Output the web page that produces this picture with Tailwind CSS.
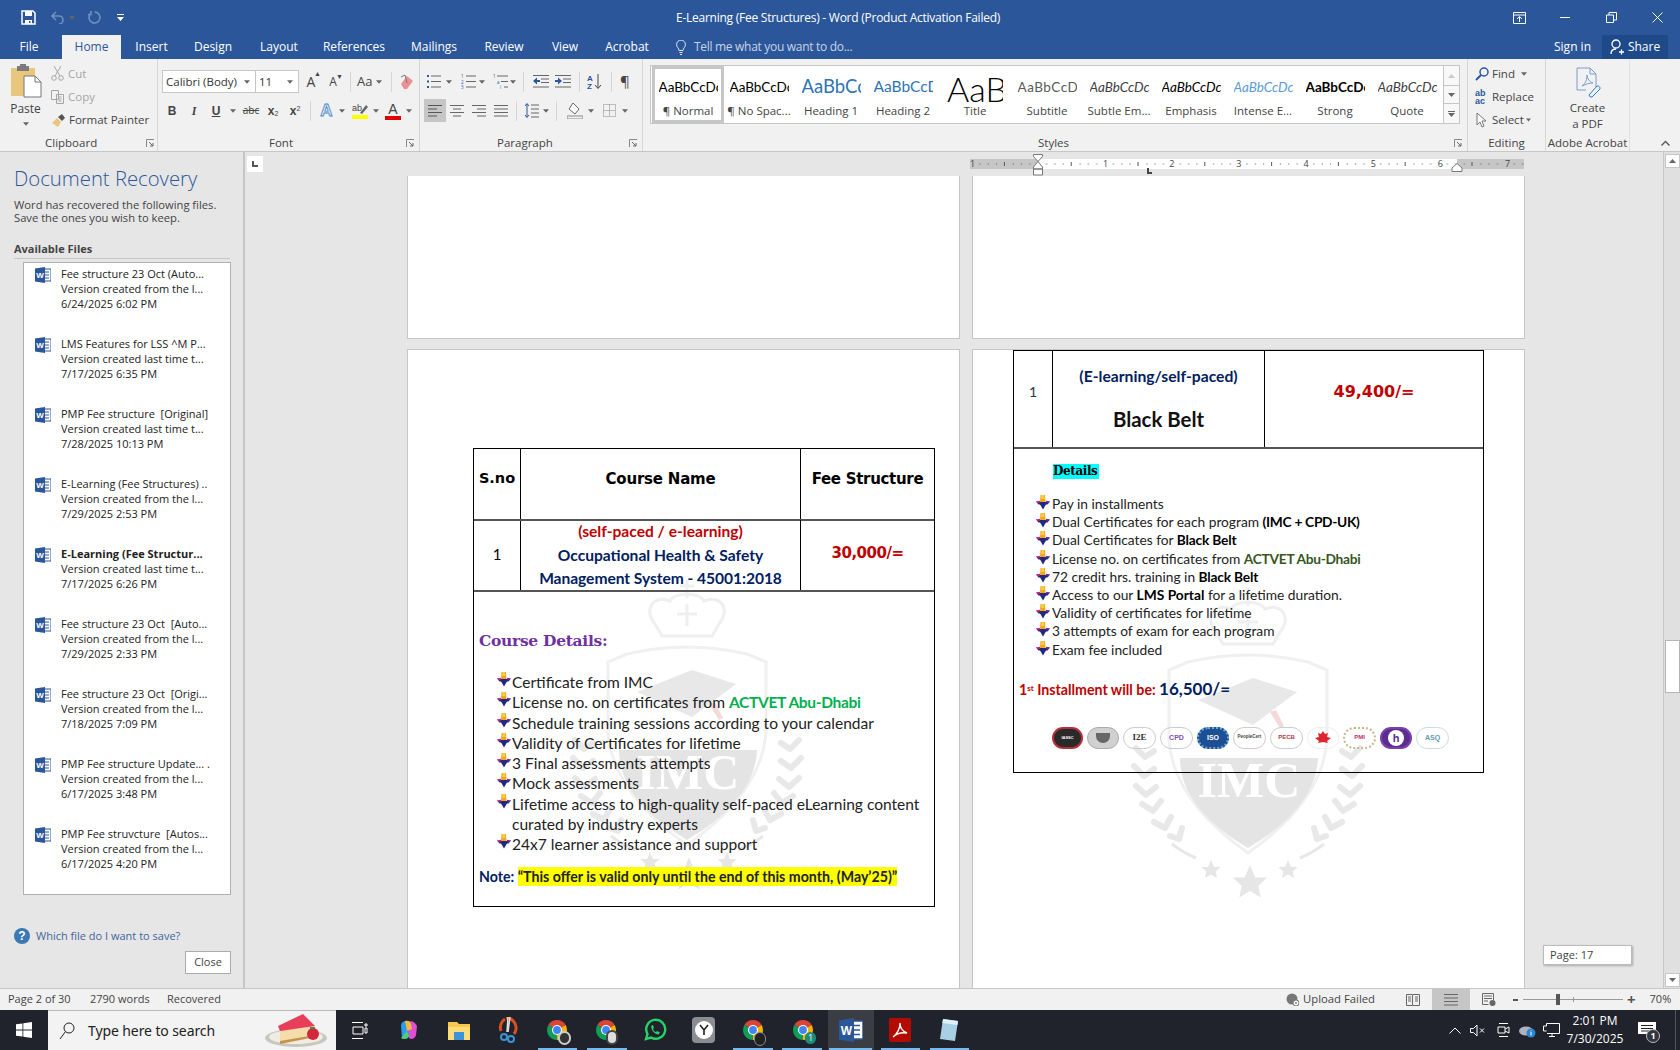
<!DOCTYPE html>
<html lang="en">
<head>
<meta charset="UTF-8">
<title>E-Learning (Fee Structures) - Word</title>
<script src="https://cdn.jsdelivr.net/npm/@tailwindcss/browser@4"></script>
</head>
<body class="w-[1680px] h-[1050px] overflow-hidden flex flex-col bg-[#e6e6e6] font-['Open_Sans',sans-serif] text-[11.5px] text-[#444]">

<!-- shared icons -->
<svg class="hidden">
  <defs>
    <symbol id="caret" viewBox="0 0 7 4"><path d="M0 0h7L3.5 4z" fill="#666"/></symbol>
    <symbol id="launch" viewBox="0 0 9 9"><path d="M.5 8V.5H8" fill="none" stroke="#888"/><path d="M3 3l4 4M7 4v3H4" fill="none" stroke="#666"/></symbol>
    <symbol id="bul" viewBox="0 0 14 15">
      <path d="M4.500 0h4.500l.5 7H4z" fill="#f2a51e"/>
      <path d="M5.500 0h2.500l.3 4H5.200z" fill="#f7cf4a"/>
      <path d="M0 6.500l4 .5h6l4-.5-2.500 3H2.500z" fill="#23287f"/>
      <path d="M3.500 8.500h7L7 14.500z" fill="#23287f"/>
      <path d="M0 6.500l4-.8v1.800l-2 .8z" fill="#c9207e"/>
      <path d="M14 6.500l-4-.8v1.800l2 .8z" fill="#6a2aa0"/>
    </symbol>
    <symbol id="word" viewBox="0 0 16 16">
      <path d="M5 2h11v12H5z" fill="#fff" stroke="#2b579a"/>
      <path d="M9 5h5M9 8h5M9 11h5" stroke="#2b579a"/>
      <path d="M0 1.500l10-1.500v16L0 14.500z" fill="#2b579a"/>
      <text x="5" y="11" font-size="8" font-weight="700" fill="#fff" text-anchor="middle" font-family="Liberation Sans">W</text>
    </symbol>
    <symbol id="chrome" viewBox="0 0 24 24">
      <path d="M12 12L3.340 7A10 10 0 0 1 20.660 7z" fill="#db4437"/>
      <path d="M12 12L20.660 7A10 10 0 0 1 12 22z" fill="#f4b400"/>
      <path d="M12 12L12 22A10 10 0 0 1 3.340 7z" fill="#0f9d58"/>
      <circle cx="12" cy="12" r="5" fill="#fff"/><circle cx="12" cy="12" r="3.900" fill="#4285f4"/>
    </symbol>
    <symbol id="lines4" viewBox="0 0 14 12"><path d="M0 .5h14M0 4h14M0 7.500h14M0 11h14" stroke="#666" fill="none"/></symbol>
    <symbol id="star" viewBox="-10 -10 20 20"><path d="M0-10L2.900-3.100 9.500-3.100 4.700 1.500 5.900 8.100 0 4.500-5.900 8.100-4.700 1.500-9.500-3.100-2.900-3.100z" fill="#e6e6e6"/></symbol>
    <!-- faded IMC crest behind the page text -->
    <symbol id="mark" viewBox="0 0 300 330">
      <path d="M118 52c-12-14-2-30 15-23 4-9 30-9 34 0 17-7 27 9 15 23l-7 12h-50z" fill="none" stroke="#efefef" stroke-width="3"/>
      <path d="M150 8v18M143 14h14M150 32v22M140 42h20" stroke="#efefef" stroke-width="3" fill="none"/>
      <path d="M90 82q60-14 120 0l19 8v70q-4 60-79 113q-75-53-79-113V90z" fill="none" stroke="#f0f0f0" stroke-width="3"/>
      <path d="M155 98l44 14-44 33-55-25z" fill="#e8e8e8"/>
      <path d="M172 132l10 16 4-2-8-16z" fill="#f3d9d9"/>
      <path d="M82 178h138q-2 50-70 90q-68-40-68-90z" fill="#e4e4e4"/>
      <text x="151" y="217" text-anchor="middle" font-family="Liberation Serif" font-weight="700" font-size="50" fill="#fff">IMC</text>
      <g fill="none" stroke="#e8e8e8" stroke-width="6" stroke-linecap="round" stroke-linejoin="round">
        <path d="M38 168l9 9 9-6M36 186l10 10 10-7M38 206l10 9 10-8M44 224l11 7 8-10M56 242l11 6 6-11M72 256l9 3 3-11"/>
        <path d="M262 168l-9 9-9-6M264 186l-10 10-10-7M262 206l-10 9-10-8M256 224l-11 7-8-10M244 242l-11 6-6-11M228 256l-9 3-3-11"/>
      </g>
      <path d="M74 264q10 8 24 14M226 264q-10 8-24 14" fill="none" stroke="#e8e8e8" stroke-width="3"/>
      <use href="#star" x="103" y="280" width="20" height="20"/>
      <use href="#star" x="180" y="280" width="20" height="20"/>
      <use href="#star" x="134" y="285" width="36" height="36"/>
    </symbol>
  </defs>
</svg>

<!-- title bar -->
<div class="h-[35px] bg-[#2b579a] text-white flex items-center relative shrink-0">
  <div class="flex items-center pl-[21px] gap-[13px]">
    <svg class="w-[15px] h-[15px]" viewBox="0 0 15 15"><path d="M1 1h11l2 2v11H1z" fill="none" stroke="#fff" stroke-width="1.500"/><path d="M4 1h7v5H4zM4 10h7v4H4z" fill="#fff"/><path d="M8 11h1.500v2H8z" fill="#2b579a"/></svg>
    <svg class="w-[14px] h-[13px] ml-[2px]" viewBox="0 0 14 13"><path d="M5 1L1 5l4 4M1 5h7a4 4 0 0 1 0 8" fill="none" stroke="#6f8fbe" stroke-width="1.600"/></svg>
    <svg class="w-[6px] h-[4px] -ml-[9px]"><use href="#caret"/></svg>
    <svg class="w-[13px] h-[13px]" viewBox="0 0 13 13"><path d="M6.500 1a5.500 5.500 0 1 1-4 1.700M3 0v3.500H0" fill="none" stroke="#6f8fbe" stroke-width="1.600"/></svg>
    <svg class="w-[7px] h-[7px] ml-[3px]" viewBox="0 0 7 7"><path d="M0 0h7v1H0zM0 3h7L3.500 7z" fill="#fff"/></svg>
  </div>
  <div class="absolute left-[676px] top-[9px] text-[12px] tracking-[-0.25px]">E-Learning (Fee Structures) - Word (Product Activation Failed)</div>
  <div class="ml-auto flex items-center text-white">
    <div class="w-[46px] h-[35px] flex items-center justify-center"><svg class="w-[13px] h-[12px]" viewBox="0 0 13 12"><path d="M.5.500h12v11H.5zM.5 3h12M6.500 10V5M4 7l2.500-2.500L9 7" fill="none" stroke="#fff"/></svg></div>
    <div class="w-[46px] h-[35px] flex items-center justify-center"><div class="w-[10px] h-px bg-white"></div></div>
    <div class="w-[46px] h-[35px] flex items-center justify-center"><svg class="w-[11px] h-[11px]" viewBox="0 0 11 11"><path d="M.5 3h7v7.500h-7zM3 3V.5h7.500V8H7.500" fill="none" stroke="#fff"/></svg></div>
    <div class="w-[46px] h-[35px] flex items-center justify-center"><svg class="w-[11px] h-[11px]" viewBox="0 0 11 11"><path d="M.5.500l10 10M10.500.5l-10 10" stroke="#fff"/></svg></div>
  </div>
</div>

<!-- tabs -->
<div class="h-[24px] bg-[#2b579a] text-white flex items-stretch text-[12px] shrink-0">
  <div class="w-[58px] mr-[4px] flex items-center justify-center">File</div>
  <div class="w-[59px] flex items-center justify-center bg-[#f1f1f1] text-[#2b579a]">Home</div>
  <div class="w-[61px] flex items-center justify-center">Insert</div>
  <div class="w-[62px] flex items-center justify-center">Design</div>
  <div class="w-[70px] flex items-center justify-center">Layout</div>
  <div class="w-[80px] flex items-center justify-center">References</div>
  <div class="w-[80px] flex items-center justify-center">Mailings</div>
  <div class="w-[60px] flex items-center justify-center">Review</div>
  <div class="w-[62px] flex items-center justify-center">View</div>
  <div class="w-[62px] flex items-center justify-center">Acrobat</div>
  <div class="flex items-center text-[#c7d3e6] ml-[18px] gap-[8px] tracking-[-0.3px]">
    <svg class="w-[10px] h-[15px]" viewBox="0 0 10 15"><path d="M3 10.500C3 8 .6 7.500.6 4.500a4.400 4.400 0 0 1 8.800 0C9.400 7.500 7 8 7 10.500zM3.500 12.500h3M4 14.500h2" fill="none" stroke="#dfe6f1"/></svg>
    Tell me what you want to do...
  </div>
  <div class="ml-auto flex items-center">Sign in</div>
  <div class="w-[66px] ml-[11px] mr-[12px] bg-[#1f4a8a] flex items-center justify-center gap-[4px]">
    <svg class="w-[14px] h-[16px]" viewBox="0 0 14 16"><circle cx="6" cy="5" r="4" fill="none" stroke="#fff" stroke-width="1.300"/><path d="M1 15c0-3 2-5 5-5M9 13h5M11.500 10.500v5" fill="none" stroke="#fff" stroke-width="1.300"/></svg>
    Share
  </div>
</div>

<!-- ribbon -->
<div class="h-[93px] bg-[#f1f1f1] border-b border-[#c6c6c6] flex shrink-0 text-[#444]">

  <!-- clipboard -->
  <div class="w-[158px] border-r border-[#d6d6d6] flex flex-col">
    <div class="h-[76px] flex">
      <div class="w-[50px] flex flex-col items-center pl-[1px] pt-[5px]">
        <svg class="w-[32px] h-[34px]" viewBox="0 0 32 34"><path d="M1 4h24v28H1z" fill="#e8c67e"/><path d="M7 2h12v5H7z" fill="#7b7b7b"/><path d="M10 0h6v3h-6z" fill="#7b7b7b"/><path d="M14 12h11l6 6v15H14z" fill="#fff" stroke="#777"/><path d="M25 12v6h6" fill="none" stroke="#777"/></svg>
        <div class="text-[12px] leading-[16px] mt-[3px]">Paste</div>
        <svg class="w-[6px] h-[4px] mt-[5px]"><use href="#caret"/></svg>
      </div>
      <div class="flex flex-col pt-[3px] pl-[1px]">
        <div class="h-[23px] flex items-center gap-[4px] text-[#a6a6a6]"><svg class="w-[13px] h-[15px]" viewBox="0 0 13 15"><path d="M3 0l6 10M10 0L4 10" stroke="#a6a6a6" fill="none"/><circle cx="3" cy="12" r="2.300" fill="none" stroke="#a6a6a6"/><circle cx="10" cy="12" r="2.300" fill="none" stroke="#a6a6a6"/></svg>Cut</div>
        <div class="h-[23px] flex items-center gap-[4px] text-[#a6a6a6]"><svg class="w-[13px] h-[14px]" viewBox="0 0 13 14"><path d="M.5.500h7v9h-7zM5.500 4.500h7v9h-7zM7.500 7h3M7.500 9h3M7.500 11h3" fill="#f1f1f1" stroke="#a6a6a6"/></svg>Copy</div>
        <div class="h-[24px] flex items-center gap-[2px] whitespace-nowrap"><svg class="w-[16px] h-[15px]" viewBox="0 0 16 15"><path d="M1 10l5-5 4 4-3 5z" fill="#e8c67e"/><path d="M7 4l4-3 3 4-3 3z" fill="#555"/></svg>Format Painter</div>
      </div>
    </div>
    <div class="flex items-center pl-[45px] h-[16px] relative">Clipboard<svg class="w-[9px] h-[9px] absolute left-[146px] top-[4px]"><use href="#launch"/></svg></div>
  </div>

  <!-- font -->
  <div class="w-[262px] border-r border-[#d6d6d6] flex flex-col">
    <div class="h-[76px] flex flex-col pt-[11px] pl-[4px]">
      <div class="h-[23px] flex items-center">
        <div class="w-[94px] h-[23px] bg-white border border-[#c6c6c6] flex items-center pl-[3px] text-[#333]">Calibri (Body)<svg class="w-[6px] h-[4px] ml-auto mr-[5px]"><use href="#caret"/></svg></div>
        <div class="w-[43px] h-[23px] bg-white border border-l-0 border-[#c6c6c6] flex items-center pl-[3px] text-[#333]">11<svg class="w-[6px] h-[4px] ml-auto mr-[5px]"><use href="#caret"/></svg></div>
        <div class="w-[22px] text-center text-[14px] ml-[1px] relative">A<span class="absolute text-[7px] left-[14px] -top-[2px]">▲</span></div>
        <div class="w-[22px] text-center text-[12px] relative">A<span class="absolute text-[7px] left-[14px] -top-[1px]">▼</span></div>
        <div class="w-px h-[20px] bg-[#d6d6d6] ml-[6px]"></div>
        <div class="text-[13px] ml-[6px]">Aa</div>
        <svg class="w-[6px] h-[4px] ml-[4px]"><use href="#caret"/></svg>
        <div class="w-px h-[20px] bg-[#d6d6d6] ml-[9px]"></div>
        <svg class="w-[16px] h-[16px] ml-[7px]" viewBox="0 0 16 16"><path d="M2 10l6-8 6 5-6 8H5z" fill="#eb8f95"/><path d="M2 3l4-2 2 8" fill="none" stroke="#777"/></svg>
      </div>
      <div class="h-[23px] flex items-center mt-[6px] -ml-[1px]">
        <div class="w-[22px] text-center font-bold text-[12px] font-['Liberation_Sans']">B</div>
        <div class="w-[22px] text-center italic font-bold text-[12px] font-['Liberation_Serif']">I</div>
        <div class="w-[22px] text-center font-bold underline text-[12px] font-['Liberation_Sans']">U</div>
        <svg class="w-[6px] h-[4px] ml-[3px]"><use href="#caret"/></svg>
        <div class="w-[22px] text-center line-through text-[10px] ml-[4px]">abc</div>
        <div class="w-[22px] text-center font-bold text-[12px] font-['Liberation_Sans']">x<sub class="text-[7px] font-normal">2</sub></div>
        <div class="w-[22px] text-center font-bold text-[12px] font-['Liberation_Sans']">x<sup class="text-[7px] font-normal">2</sup></div>
        <div class="w-px h-[20px] bg-[#d6d6d6] ml-[4px]"></div>
        <svg class="w-[15px] h-[17px] ml-[8px]" viewBox="0 0 15 17"><text x="7.500" y="14" text-anchor="middle" font-size="17" font-weight="700" font-family="Liberation Sans" fill="#dbe7f7" stroke="#4a86c5" stroke-width=".8">A</text></svg>
        <svg class="w-[6px] h-[4px] ml-[5px]"><use href="#caret"/></svg>
        <svg class="w-[16px] h-[17px] ml-[7px]" viewBox="0 0 16 17"><text x="0" y="9" font-size="9" font-family="Liberation Sans" fill="#444">ab</text><path d="M8 11l6-8 2 2-6 7z" fill="#666"/><path d="M0 13h16v4H0z" fill="#ffff00"/></svg>
        <svg class="w-[6px] h-[4px] ml-[5px]"><use href="#caret"/></svg>
        <div class="w-[16px] ml-[6px] flex flex-col items-center text-[14px] leading-[14px] font-['Liberation_Sans']">A<div class="w-[16px] h-[4px] bg-[#e00000]"></div></div>
        <svg class="w-[6px] h-[4px] ml-[5px]"><use href="#caret"/></svg>
      </div>
    </div>
    <div class="flex items-center pl-[111px] h-[16px] relative">Font<svg class="w-[9px] h-[9px] absolute left-[248px] top-[4px]"><use href="#launch"/></svg></div>
  </div>

  <!-- paragraph -->
  <div class="w-[223px] border-r border-[#d6d6d6] flex flex-col">
    <div class="h-[76px] flex flex-col pt-[11px] pl-[4px]">
      <div class="h-[23px] flex items-center">
        <svg class="w-[15px] h-[15px] ml-[2px]" viewBox="0 0 15 15"><path d="M1 1h2v2H1zM1 6.500h2v2H1zM1 12h2v2H1z" fill="#2b579a"/><path d="M5 2h10M5 7.500h10M5 13h10" stroke="#666"/></svg>
        <svg class="w-[6px] h-[4px] ml-[5px]"><use href="#caret"/></svg>
        <svg class="w-[15px] h-[15px] ml-[9px]" viewBox="0 0 15 15"><path d="M5 2h10M5 7.500h10M5 13h10" stroke="#666"/><text x="0" y="4" font-size="4.500" fill="#2b579a">1</text><text x="0" y="9.500" font-size="4.500" fill="#2b579a">2</text><text x="0" y="15" font-size="4.500" fill="#2b579a">3</text></svg>
        <svg class="w-[6px] h-[4px] ml-[3px]"><use href="#caret"/></svg>
        <svg class="w-[15px] h-[15px] ml-[8px]" viewBox="0 0 15 15"><path d="M4 2h11M8 7.500h7M11 13h4" stroke="#666"/><text x="0" y="4" font-size="4.500" fill="#2b579a">1</text><text x="4" y="9.500" font-size="4.500" fill="#2b579a">a</text><text x="7" y="15" font-size="4.500" fill="#2b579a">i</text></svg>
        <svg class="w-[6px] h-[4px] ml-[2px]"><use href="#caret"/></svg>
        <div class="w-px h-[20px] bg-[#d6d6d6] ml-[7px]"></div>
        <svg class="w-[16px] h-[13px] ml-[9px]" viewBox="0 0 16 13"><path d="M0 .5h16M8 4h8M8 7.500h8M0 12h16" stroke="#666"/><path d="M0 6l4-3.500V5h3v2H4v2.500z" fill="#2b579a"/></svg>
        <svg class="w-[16px] h-[13px] ml-[6px]" viewBox="0 0 16 13"><path d="M0 .5h16M8 4h8M8 7.500h8M0 12h16" stroke="#666"/><path d="M7 6L3 2.500V5H0v2h3v2.500z" fill="#2b579a"/></svg>
        <div class="w-px h-[20px] bg-[#d6d6d6] ml-[8px]"></div>
        <svg class="w-[15px] h-[17px] ml-[7px]" viewBox="0 0 15 17"><text x="0" y="7.500" font-size="8" font-weight="700" fill="#2b579a" font-family="Liberation Sans">A</text><text x="0" y="16" font-size="8" font-weight="700" fill="#2b579a" font-family="Liberation Sans">Z</text><path d="M11 1v14M8 12l3 3.500 3-3.500" fill="none" stroke="#444"/></svg>
        <div class="w-px h-[20px] bg-[#d6d6d6] ml-[9px]"></div>
        <div class="text-[15px] ml-[8px]">¶</div>
      </div>
      <div class="h-[23px] flex items-center mt-[6px]">
        <div class="w-[22px] h-[23px] bg-[#c6c6c6] flex items-center justify-center"><svg class="w-[14px] h-[12px]" viewBox="0 0 14 12"><path d="M0 .5h14M0 4h9M0 7.500h14M0 11h9" stroke="#555"/></svg></div>
        <div class="w-[22px] flex justify-center"><svg class="w-[14px] h-[12px]" viewBox="0 0 14 12"><path d="M0 .5h14M3 4h8M0 7.500h14M3 11h8" stroke="#666"/></svg></div>
        <div class="w-[22px] flex justify-center"><svg class="w-[14px] h-[12px]" viewBox="0 0 14 12"><path d="M0 .5h14M5 4h9M0 7.500h14M5 11h9" stroke="#666"/></svg></div>
        <div class="w-[22px] flex justify-center"><svg class="w-[14px] h-[12px]"><use href="#lines4"/></svg></div>
        <div class="w-px h-[20px] bg-[#d6d6d6] ml-[4px]"></div>
        <svg class="w-[15px] h-[15px] ml-[7px]" viewBox="0 0 15 15"><path d="M7 2h8M7 6h8M7 10h8M7 14h8" stroke="#666"/><path d="M3 1v13M1 3l2-2.500L5 3M1 12l2 2.500L5 12" fill="none" stroke="#2b579a"/></svg>
        <svg class="w-[6px] h-[4px] ml-[4px]"><use href="#caret"/></svg>
        <div class="w-px h-[20px] bg-[#d6d6d6] ml-[7px]"></div>
        <svg class="w-[16px] h-[17px] ml-[10px]" viewBox="0 0 16 17"><path d="M6 1l6 6-4 5-6-5z" fill="#fff" stroke="#666"/><path d="M0 14h16v3H0z" fill="none" stroke="#888"/></svg>
        <svg class="w-[6px] h-[4px] ml-[5px]"><use href="#caret"/></svg>
        <svg class="w-[13px] h-[13px] ml-[9px]" viewBox="0 0 13 13"><path d="M.5.500h12v12H.5zM6.500.5v12M.5 6.500h12" fill="none" stroke="#888" stroke-dasharray="1 1"/></svg>
        <svg class="w-[6px] h-[4px] ml-[6px]"><use href="#caret"/></svg>
      </div>
    </div>
    <div class="flex items-center pl-[77px] h-[16px] relative">Paragraph<svg class="w-[9px] h-[9px] absolute left-[209px] top-[4px]"><use href="#launch"/></svg></div>
  </div>

  <!-- styles -->
  <div class="w-[825px] border-r border-[#d6d6d6] flex flex-col">
    <div class="h-[76px] pt-[6px] pl-[7px]">
      <div class="w-[810px] h-[59px] bg-white border border-[#c6c6c6] flex relative">
        <div class="w-[72px] h-[57px] border-[3px] border-[#c6c6c6] flex flex-col items-center overflow-hidden ml-[1px] -mr-[1px]">
          <div class="h-[35px] pt-[1px] flex items-center text-[13.500px] text-black font-['Lato'] whitespace-nowrap w-[59px] overflow-hidden">AaBbCcDc</div>
          <div class="text-[11.500px] leading-[14px]">¶ Normal</div>
        </div>
        <div class="w-[72px] flex flex-col items-center overflow-hidden">
          <div class="h-[38px] pt-[4px] flex items-center text-[13.500px] text-black font-['Lato'] whitespace-nowrap w-[59px] overflow-hidden">AaBbCcDc</div>
          <div class="text-[11.500px] leading-[14px] whitespace-nowrap">¶ No Spac...</div>
        </div>
        <div class="w-[72px] flex flex-col items-center overflow-hidden">
          <div class="h-[38px] pt-[4px] flex items-center text-[18.500px] text-[#2e74b5] font-['Lato'] whitespace-nowrap w-[59px] overflow-hidden">AaBbCcD</div>
          <div class="text-[11.500px] leading-[14px]">Heading 1</div>
        </div>
        <div class="w-[72px] flex flex-col items-center overflow-hidden">
          <div class="h-[38px] pt-[4px] flex items-center text-[15.500px] text-[#2e74b5] font-['Lato'] whitespace-nowrap w-[59px] overflow-hidden">AaBbCcDc</div>
          <div class="text-[11.500px] leading-[14px]">Heading 2</div>
        </div>
        <div class="w-[72px] flex flex-col items-center overflow-hidden">
          <div class="h-[38px] flex items-end text-[34px] leading-[30px] text-black font-['Lato'] font-light whitespace-nowrap w-[56px] overflow-hidden">AaB</div>
          <div class="text-[11.500px] leading-[14px]">Title</div>
        </div>
        <div class="w-[72px] flex flex-col items-center overflow-hidden">
          <div class="h-[38px] pt-[4px] flex items-center text-[13.500px] tracking-[0.5px] text-[#5a5a5a] font-['Lato'] whitespace-nowrap w-[59px] overflow-hidden">AaBbCcDc</div>
          <div class="text-[11.500px] leading-[14px]">Subtitle</div>
        </div>
        <div class="w-[72px] flex flex-col items-center overflow-hidden">
          <div class="h-[38px] pt-[4px] flex items-center text-[13.500px] italic text-[#404040] font-['Lato'] whitespace-nowrap w-[59px] overflow-hidden">AaBbCcDc</div>
          <div class="text-[11.500px] leading-[14px] whitespace-nowrap">Subtle Em...</div>
        </div>
        <div class="w-[72px] flex flex-col items-center overflow-hidden">
          <div class="h-[38px] pt-[4px] flex items-center text-[13.500px] italic text-black font-['Lato'] whitespace-nowrap w-[59px] overflow-hidden">AaBbCcDc</div>
          <div class="text-[11.500px] leading-[14px]">Emphasis</div>
        </div>
        <div class="w-[72px] flex flex-col items-center overflow-hidden">
          <div class="h-[38px] pt-[4px] flex items-center text-[13.500px] italic text-[#5b9bd5] font-['Lato'] whitespace-nowrap w-[59px] overflow-hidden">AaBbCcDc</div>
          <div class="text-[11.500px] leading-[14px] whitespace-nowrap">Intense E...</div>
        </div>
        <div class="w-[72px] flex flex-col items-center overflow-hidden">
          <div class="h-[38px] pt-[4px] flex items-center text-[13.500px] font-bold text-black font-['Lato'] whitespace-nowrap w-[59px] overflow-hidden">AaBbCcDc</div>
          <div class="text-[11.500px] leading-[14px]">Strong</div>
        </div>
        <div class="w-[72px] flex flex-col items-center overflow-hidden">
          <div class="h-[38px] pt-[4px] flex items-center text-[13.500px] italic text-[#404040] font-['Lato'] whitespace-nowrap w-[59px] overflow-hidden">AaBbCcDc</div>
          <div class="text-[11.500px] leading-[14px]">Quote</div>
        </div>
        <div class="w-[16px] ml-auto border-l border-[#c6c6c6] flex flex-col bg-[#f8f8f8]">
          <div class="h-[19px] flex items-center justify-center"><svg class="w-[7px] h-[4px] rotate-180 opacity-30"><use href="#caret"/></svg></div>
          <div class="h-[19px] border-y border-[#c6c6c6] flex items-center justify-center"><svg class="w-[7px] h-[4px]"><use href="#caret"/></svg></div>
          <div class="flex-1 flex flex-col items-center justify-center gap-[1px]"><div class="w-[7px] h-px bg-[#666]"></div><svg class="w-[7px] h-[4px]"><use href="#caret"/></svg></div>
        </div>
      </div>
    </div>
    <div class="flex items-center pl-[395px] h-[16px] relative">Styles<svg class="w-[9px] h-[9px] absolute left-[811px] top-[4px]"><use href="#launch"/></svg></div>
  </div>

  <!-- editing -->
  <div class="w-[78px] border-r border-[#d6d6d6] flex flex-col">
    <div class="h-[76px] flex flex-col pt-[3px] pl-[7px]">
      <div class="h-[23px] flex items-center gap-[3px]"><svg class="w-[14px] h-[14px]" viewBox="0 0 14 14"><circle cx="9" cy="5" r="4" fill="none" stroke="#2b579a" stroke-width="1.500"/><path d="M6 8l-5 5" stroke="#2b579a" stroke-width="2"/></svg>Find<svg class="w-[6px] h-[4px] ml-[3px]"><use href="#caret"/></svg></div>
      <div class="h-[23px] flex items-center gap-[3px]"><div class="w-[14px] text-[9px] leading-[8px] font-bold text-[#2b579a] font-['Liberation_Sans']">ab<br>ac</div>Replace</div>
      <div class="h-[23px] flex items-center gap-[3px]"><svg class="w-[14px] h-[16px]" viewBox="0 0 14 16"><path d="M2 1v12l3-3 2 5 2-1-2-5h4z" fill="#fff" stroke="#777"/></svg>Select<svg class="w-[5px] h-[4px] -ml-[1px]"><use href="#caret"/></svg></div>
    </div>
    <div class="flex items-center justify-center h-[16px]">Editing</div>
  </div>

  <!-- acrobat -->
  <div class="w-[84px] border-r border-[#e1e1e1] flex flex-col">
    <div class="h-[76px] flex flex-col items-center pt-[8px]">
      <svg class="w-[26px] h-[32px]" viewBox="0 0 26 32"><path d="M2 1h13l6 6v13M2 1v22h9" fill="none" stroke="#7c9ccb"/><path d="M15 1v6h6" fill="none" stroke="#7c9ccb"/><path d="M7 19c4-3 5-7 5-11 0 4 3 7 6 8-4 0-7 1-11 3z" fill="none" stroke="#7c9ccb"/><path d="M14 28l8-9a2.500 2.500 0 0 1 3 3l-8 8a2.500 2.500 0 0 1-3-2z" fill="none" stroke="#2b7cd3"/></svg>
      <div class="leading-[16px] text-center mt-[1px]">Create<br>a PDF</div>
    </div>
    <div class="flex items-center justify-center h-[16px] whitespace-nowrap">Adobe Acrobat</div>
  </div>

  <div class="flex-1 flex items-end pb-[5px] pl-[31px]"><svg class="w-[9px] h-[6px]" viewBox="0 0 9 6"><path d="M.5 5.500l4-4 4 4" fill="none" stroke="#555" stroke-width="1.300"/></svg></div>
</div>

<!-- work area -->
<div class="h-[836px] flex shrink-0">

  <!-- document recovery pane -->
  <div class="w-[245px] shrink-0 border-r-2 border-[#c6c6c6] flex flex-col pl-[14px] relative">
    <div class="text-[20.300px] leading-[28px] mt-[12px] text-[#2b579a] font-light whitespace-nowrap">Document Recovery</div>
    <div class="text-[11.200px] leading-[13px] mt-[6px] text-[#444] whitespace-nowrap">Word has recovered the following files.<br>Save the ones you wish to keep.</div>
    <div class="font-bold text-[11px] leading-[14px] mt-[18px] text-[#444] w-[216px] border-b border-[#c6c6c6] pb-[2px] h-[17px]">Available Files</div>
    <div class="w-[208px] h-[633px] ml-[9px] mt-[3px] bg-white border border-[#b0b0b0] pt-[3px] text-[#222] text-[11px] leading-[15px] whitespace-nowrap">
      <div class="h-[70px] flex pl-[11px]"><svg class="w-[16px] h-[16px] mt-[1px]"><use href="#word"/></svg><div class="ml-[10px]">Fee structure 23 Oct (Auto...<br>Version created from the l...<br>6/24/2025 6:02 PM</div></div>
      <div class="h-[70px] flex pl-[11px]"><svg class="w-[16px] h-[16px] mt-[1px]"><use href="#word"/></svg><div class="ml-[10px]">LMS Features for LSS ^M P...<br>Version created last time t...<br>7/17/2025 6:35 PM</div></div>
      <div class="h-[70px] flex pl-[11px]"><svg class="w-[16px] h-[16px] mt-[1px]"><use href="#word"/></svg><div class="ml-[10px]">PMP Fee structure &nbsp;[Original]<br>Version created last time t...<br>7/28/2025 10:13 PM</div></div>
      <div class="h-[70px] flex pl-[11px]"><svg class="w-[16px] h-[16px] mt-[1px]"><use href="#word"/></svg><div class="ml-[10px]">E-Learning (Fee Structures) ..<br>Version created from the l...<br>7/29/2025 2:53 PM</div></div>
      <div class="h-[70px] flex pl-[11px]"><svg class="w-[16px] h-[16px] mt-[1px]"><use href="#word"/></svg><div class="ml-[10px]"><b>E-Learning (Fee Structur...</b><br>Version created last time t...<br>7/17/2025 6:26 PM</div></div>
      <div class="h-[70px] flex pl-[11px]"><svg class="w-[16px] h-[16px] mt-[1px]"><use href="#word"/></svg><div class="ml-[10px]">Fee structure 23 Oct &nbsp;[Auto...<br>Version created from the l...<br>7/29/2025 2:33 PM</div></div>
      <div class="h-[70px] flex pl-[11px]"><svg class="w-[16px] h-[16px] mt-[1px]"><use href="#word"/></svg><div class="ml-[10px]">Fee structure 23 Oct &nbsp;[Origi...<br>Version created from the l...<br>7/18/2025 7:09 PM</div></div>
      <div class="h-[70px] flex pl-[11px]"><svg class="w-[16px] h-[16px] mt-[1px]"><use href="#word"/></svg><div class="ml-[10px]">PMP Fee structure Update... .<br>Version created from the l...<br>6/17/2025 3:48 PM</div></div>
      <div class="h-[70px] flex pl-[11px]"><svg class="w-[16px] h-[16px] mt-[1px]"><use href="#word"/></svg><div class="ml-[10px]">PMP Fee struvcture &nbsp;[Autos...<br>Version created from the l...<br>6/17/2025 4:20 PM</div></div>
    </div>
    <div class="flex items-center gap-[6px] mt-[33px] text-[#44659b] text-[11px]">
      <div class="w-[16px] h-[16px] rounded-full bg-[#3c78b4] text-white font-bold text-[12px] flex items-center justify-center font-['Liberation_Sans']">?</div>
      Which file do I want to save?
    </div>
    <div class="w-[46px] h-[23px] ml-[171px] mt-[6px] bg-white border border-[#ababab] flex items-center justify-center text-[11px]">Close</div>
  </div>

  <!-- document canvas -->
  <div class="flex-1 flex flex-col relative">
    <div class="h-[24px] shrink-0 flex items-center relative">
      <div class="w-[16px] h-[16px] bg-white ml-[2px] flex items-center justify-center"><div class="w-[6px] h-[6px] border-l-2 border-b-2 border-[#555]"></div></div>
      <div class="ml-[707px] h-[10px] w-[554px] flex text-[9px] leading-[10px] text-[#444] -mt-[1px] relative">
        <div class="w-[68px] bg-[#c6c6c6] flex justify-between items-center"><span>1</span></div>
        <div class="w-[419px] bg-white flex items-center relative">
          <span class="ml-[65px]">1</span><span class="ml-[61px]">2</span><span class="ml-[62px]">3</span><span class="ml-[62px]">4</span><span class="ml-[62px]">5</span><span class="ml-[62px]">6</span>
          <div class="absolute left-[109px] top-[9px] w-[5px] h-[6px] border-l-2 border-b-2 border-[#444]"></div>
        </div>
        <div class="flex-1 bg-[#c6c6c6] flex items-center"><span class="ml-[48px]">7</span></div>
        <svg class="absolute left-[1.200px] top-0 w-[554px] h-[10px]">
          <defs><pattern id="rul" x="0" y="0" width="66.800" height="10" patternUnits="userSpaceOnUse"><path d="M8.350 5h1M16.700 5h1M25 5h1M41.700 5h1M50 5h1M58.400 5h1M33.400 3v4" stroke="#555" stroke-width="1" fill="none"/></pattern></defs>
          <rect width="554" height="10" fill="url(#rul)"/>
        </svg>
      </div>
      <!-- indent markers on the ruler -->
      <svg class="absolute left-[787px] top-[2px] w-[12px] h-[22px]" viewBox="0 0 12 22"><path d="M1.500.5h9v2L6 7.500 1.500 2.500zM6 7.500L10.500 13v2h-9v-2zM1.500 15h9v6h-9z" fill="#fff" stroke="#777"/></svg>
      <svg class="absolute left-[1206px] top-[11px] w-[12px] h-[9px]" viewBox="0 0 12 9"><path d="M6 .5L11 5v3.500H1V5z" fill="#fff" stroke="#777"/></svg>
    </div>
    <div class="flex-1 grid grid-cols-[553px_553px] grid-rows-[163px_1fr] gap-x-[12px] gap-y-[10px] pl-[162px] overflow-hidden">
      <div class="bg-white border-x border-b border-[#c6c6c6]"></div>
      <div class="bg-white border-x border-b border-[#c6c6c6]"></div>

      <!-- left page -->
      <div class="bg-white border-x border-t border-[#c6c6c6] relative font-['Lato',sans-serif] text-black">
        <svg class="absolute left-[129px] top-[222px] w-[300px] h-[330px]" viewBox="0 0 300 330"><use href="#mark"/></svg>
        <div class="w-[462px] h-[459px] ml-[65px] mt-[98px] border border-black relative flex flex-col">
          <div class="h-[72px] flex border-b-2 border-[#555] font-['DejaVu_Sans'] font-bold text-[15px]">
            <div class="w-[47px] border-r border-black text-center pt-[19px] text-[14.500px]">S.no</div>
            <div class="w-[280px] border-r border-black text-center pt-[19px] tracking-[-0.2px]">Course Name</div>
            <div class="flex-1 text-center pt-[19px] tracking-[-0.3px]">Fee Structure</div>
          </div>
          <div class="h-[71px] flex border-b-2 border-[#555]">
            <div class="w-[47px] border-r border-black flex items-center justify-center text-[15px] pb-[2px]">1</div>
            <div class="w-[280px] border-r border-black text-center font-bold text-[15.600px] leading-[23.500px] -mt-[1px] text-[#002060]">
              <div class="text-[#c00000]">(self-paced / e-learning)</div>
              <div>Occupational Health &amp; Safety</div>
              <div class="tracking-[-0.05px]">Management System - 45001:2018</div>
            </div>
            <div class="flex-1 flex items-center justify-center font-['DejaVu_Sans'] font-bold text-[15px] tracking-[-0.5px] text-[#c00000] pb-[5px]">30,000/=</div>
          </div>
          <div class="flex-1 pl-[5px] pt-[38px]">
            <div class="font-['DejaVu_Serif'] font-bold text-[15.500px] leading-[22px] text-[#7030a0] tracking-[-0.3px]">Course Details:</div>
            <div class="mt-[20px] text-[15.550px] leading-[20.300px] text-[#222] whitespace-nowrap">
              <div class="flex pl-[18px]"><svg class="w-[14px] h-[15px] mr-[1px]"><use href="#bul"/></svg>Certificate from IMC</div>
              <div class="flex pl-[18px]"><svg class="w-[14px] h-[15px] mr-[1px]"><use href="#bul"/></svg>License no. on certificates from&nbsp;<b class="text-[#00b050] tracking-[-0.35px]">ACTVET Abu-Dhabi</b></div>
              <div class="flex pl-[18px]"><svg class="w-[14px] h-[15px] mr-[1px]"><use href="#bul"/></svg>Schedule training sessions according to your calendar</div>
              <div class="flex pl-[18px]"><svg class="w-[14px] h-[15px] mr-[1px]"><use href="#bul"/></svg>Validity of Certificates for lifetime</div>
              <div class="flex pl-[18px]"><svg class="w-[14px] h-[15px] mr-[1px]"><use href="#bul"/></svg>3 Final assessments attempts</div>
              <div class="flex pl-[18px]"><svg class="w-[14px] h-[15px] mr-[1px]"><use href="#bul"/></svg>Mock assessments</div>
              <div class="flex pl-[18px]"><svg class="w-[14px] h-[15px] mr-[1px]"><use href="#bul"/></svg>Lifetime access to high-quality self-paced eLearning content</div>
              <div class="pl-[33px]">curated by industry experts</div>
              <div class="flex pl-[18px]"><svg class="w-[14px] h-[15px] mr-[1px]"><use href="#bul"/></svg>24x7 learner assistance and support</div>
            </div>
            <div class="mt-[14px] font-bold text-[14.200px] leading-[16px] text-[#002060] whitespace-nowrap">Note: <span class="bg-[#ffff00] text-[#222] py-[1px]">“This offer is valid only until the end of this month, (May’25)”</span></div>
          </div>
        </div>
      </div>

      <!-- right page -->
      <div class="bg-white border-x border-t border-[#c6c6c6] relative font-['Lato',sans-serif] text-black">
        <svg class="absolute left-[125px] top-[230px] w-[300px] h-[330px]" viewBox="0 0 300 330"><use href="#mark"/></svg>
        <div class="w-[471px] h-[423px] ml-[40px] border border-black relative flex flex-col">
          <div class="h-[98px] flex border-b-2 border-[#555]">
            <div class="w-[39px] border-r border-black flex items-center justify-center text-[14px] text-[#333] pb-[16px]">1</div>
            <div class="w-[212px] border-r border-black text-center font-bold text-[#002060] text-[15.700px] pt-[14px] leading-[22px]">
              (E-learning/self-paced)
              <div class="text-[20.400px] leading-[24px] mt-[20px] text-[#111]">Black Belt</div>
            </div>
            <div class="flex-1 flex items-center justify-center font-['DejaVu_Sans'] font-bold text-[#c00000] text-[16px] pb-[14px]">49,400/=</div>
          </div>
          <div class="flex-1">
            <div class="ml-[39px] mt-[15px] font-['DejaVu_Serif'] font-bold text-[12px] leading-[15px] tracking-[-0.4px] text-black bg-[#00ffff] w-[46px]">Details</div>
            <div class="mt-[16px] text-[13.750px] leading-[18.200px] text-[#222] whitespace-nowrap">
              <div class="flex pl-[22px]"><svg class="w-[14px] h-[15px] mr-[2px]"><use href="#bul"/></svg>Pay in installments</div>
              <div class="flex pl-[22px]"><svg class="w-[14px] h-[15px] mr-[2px]"><use href="#bul"/></svg>Dual Certificates for each program&nbsp;<b class="text-black tracking-[-0.3px]">(IMC + CPD-UK)</b></div>
              <div class="flex pl-[22px]"><svg class="w-[14px] h-[15px] mr-[2px]"><use href="#bul"/></svg>Dual Certificates for&nbsp;<b class="text-black tracking-[-0.2px]">Black Belt</b></div>
              <div class="flex pl-[22px]"><svg class="w-[14px] h-[15px] mr-[2px]"><use href="#bul"/></svg>License no. on certificates from&nbsp;<b class="text-[#375623] tracking-[-0.3px]">ACTVET Abu-Dhabi</b></div>
              <div class="flex pl-[22px]"><svg class="w-[14px] h-[15px] mr-[2px]"><use href="#bul"/></svg>72 credit hrs. training in&nbsp;<b class="text-black tracking-[-0.2px]">Black Belt</b></div>
              <div class="flex pl-[22px]"><svg class="w-[14px] h-[15px] mr-[2px]"><use href="#bul"/></svg>Access to our&nbsp;<b class="text-black">LMS Portal</b>&nbsp;for a lifetime duration.</div>
              <div class="flex pl-[22px]"><svg class="w-[14px] h-[15px] mr-[2px]"><use href="#bul"/></svg>Validity of certificates for lifetime</div>
              <div class="flex pl-[22px]"><svg class="w-[14px] h-[15px] mr-[2px]"><use href="#bul"/></svg>3 attempts of exam for each program</div>
              <div class="flex pl-[22px]"><svg class="w-[14px] h-[15px] mr-[2px]"><use href="#bul"/></svg>Exam fee included</div>
            </div>
            <div class="ml-[5px] mt-[19px] font-bold text-[#c00000] text-[14.200px] leading-[22px] whitespace-nowrap">1<sup class="text-[8px]">st</sup> Installment will be: <span class="text-[#002060] text-[17px]">16,500/=</span></div>
            <!-- accreditation logos -->
            <div class="flex items-center ml-[38px] mt-[26px] gap-[4px] text-[6px] font-['Liberation_Sans'] font-bold">
              <div class="w-[31px] h-[22px] rounded-full bg-[#2a2a2a] border-2 border-[#b5303a] text-white text-[4px] flex items-center justify-center">IASSC</div>
              <div class="w-[32px] h-[22px] rounded-full bg-[#d0d0d0] border border-[#aaa] flex items-center justify-center"><div class="w-[14px] h-[10px] bg-[#666] rounded-b-full"></div></div>
              <div class="w-[33px] h-[22px] rounded-full border border-[#ccc] text-[#333] font-['Liberation_Serif'] text-[9px] flex items-center justify-center">I2E</div>
              <div class="w-[33px] h-[22px] rounded-full border border-[#ccc] text-[#7a54b0] text-[7px] flex items-center justify-center">CPD</div>
              <div class="w-[32px] h-[22px] rounded-full bg-[#1c4f93] border-2 border-dotted border-[#6fa6d8] text-white text-[7px] flex items-center justify-center">ISO</div>
              <div class="w-[33px] h-[22px] rounded-full border border-[#ccc] text-[#444] text-[4.500px] flex items-center justify-center">PeopleCert</div>
              <div class="w-[33px] h-[22px] rounded-full border border-[#ccc] text-[#b23a48] flex items-center justify-center">PECB</div>
              <div class="w-[32px] h-[22px] rounded-full border border-[#eee] flex items-center justify-center"><svg class="w-[18px] h-[14px]" viewBox="0 0 18 14"><path d="M9 0l2 3 3-1-1 4 4 1-4 3 1 2-5-1-5 1 1-2-4-3 4-1-1-4 3 1z" fill="#e0242f"/></svg></div>
              <div class="w-[33px] h-[22px] rounded-full border-2 border-dotted border-[#c7b98e] text-[#c2306a] text-[6px] flex items-center justify-center">PMI</div>
              <div class="w-[32px] h-[22px] rounded-full bg-[#5b2d91] border-2 border-[#7a3fb0] flex items-center justify-center"><div class="w-[16px] h-[16px] rounded-full bg-white text-[#5b2d91] text-[11px] leading-[16px] text-center">h</div></div>
              <div class="w-[33px] h-[22px] rounded-full border border-[#cdd] text-[#5b9bb0] text-[7px] flex items-center justify-center">ASQ</div>
            </div>
          </div>
        </div>
      </div>
    </div>
    <div class="absolute left-[1298px] top-[793px] w-[89px] h-[20px] bg-white border border-[#bbb] shadow-[1px_1px_2px_#aaa] flex items-center pl-[6px] text-[11px] text-[#444]">Page: 17</div>
  </div>

  <!-- scrollbar -->
  <div class="w-[17px] shrink-0 bg-[#e0e0e0] border-l border-[#c6c6c6] flex flex-col items-center pt-[2px]">
    <div class="w-[15px] h-[14px] bg-white border border-[#c6c6c6] flex items-center justify-center"><svg class="w-[7px] h-[4px] rotate-180"><use href="#caret"/></svg></div>
    <div class="w-[15px] h-[53px] bg-white border border-[#b5b5b5] mt-[472px]"></div>
    <div class="w-[15px] h-[14px] bg-white border border-[#c6c6c6] flex items-center justify-center mt-auto mb-[1px]"><svg class="w-[7px] h-[4px]"><use href="#caret"/></svg></div>
  </div>
</div>

<!-- status bar -->
<div class="h-[22px] bg-[#f1f1f1] border-t border-[#c6c6c6] flex items-center text-[11px] text-[#444] shrink-0">
  <div class="ml-[8px] w-[82px]">Page 2 of 30</div>
  <div class="w-[77px]">2790 words</div>
  <div class="w-[60px]">Recovered</div>
  <svg class="w-[13px] h-[13px] ml-[1059px]" viewBox="0 0 13 13"><circle cx="6" cy="6" r="5.500" fill="#777"/><circle cx="10" cy="10" r="3" fill="#fff" stroke="#777"/><path d="M8.800 8.800l2.400 2.400M11.200 8.800l-2.400 2.400" stroke="#777" stroke-width=".7"/></svg>
  <div class="ml-[4px] w-[103px] text-[11.300px]">Upload Failed</div>
  <svg class="w-[14px] h-[12px]" viewBox="0 0 14 12"><path d="M.5.500h6v11h-6zM7 .5h6.500v11H7M2 3h3M2 5h3M2 7h3M9 3h3M9 5h3M9 7h3" fill="none" stroke="#666"/></svg>
  <div class="w-[38px] h-[21px] bg-[#c6c6c6] ml-[12px] flex items-center justify-center"><svg class="w-[14px] h-[12px]"><use href="#lines4"/></svg></div>
  <svg class="w-[14px] h-[13px] ml-[12px]" viewBox="0 0 14 13"><path d="M.5.500h11v7M.5.500v11h6M2 3h8M2 5.500h8M2 8h4" fill="none" stroke="#666"/><circle cx="10.500" cy="10" r="3" fill="#666"/></svg>
  <div class="w-[5px] h-[2px] bg-[#555] ml-[17px]"></div>
  <div class="w-[100px] h-px bg-[#999] ml-[5px] relative"><div class="absolute left-[33px] -top-[5px] w-[4px] h-[11px] bg-[#555]"></div><div class="absolute left-[50px] -top-[2px] w-px h-[5px] bg-[#999]"></div></div>
  <div class="text-[15px] leading-[15px] font-bold text-[#555] ml-[4px]">+</div>
  <div class="ml-[14px]">70%</div>
</div>

<!-- taskbar -->
<div class="h-[40px] bg-[#20232b] flex items-stretch shrink-0 text-white relative">
  <div class="w-[48px] flex items-center justify-center"><svg class="w-[16px] h-[16px]" viewBox="0 0 16 16"><path d="M0 2.300l6.500-.9v6.200H0zM7.300 1.300L16 0v7.600H7.300zM0 8.400h6.500v6.200L0 13.700zM7.300 8.400H16V16l-8.700-1.300z" fill="#fff"/></svg></div>
  <div class="w-[288px] bg-[#f3f3f3] border-t border-[#b9b9b9] flex items-center text-[#222] font-['Noto_Sans'] text-[14px] tracking-[-0.1px]">
    <svg class="w-[16px] h-[18px] ml-[11px]" viewBox="0 0 16 18"><circle cx="10" cy="6" r="5" fill="none" stroke="#222"/><path d="M6.500 9.500L1 17" stroke="#222"/></svg>
    <span class="ml-[13px]">Type here to search</span>
    <svg class="w-[66px] h-[36px] ml-auto mr-[5px]" viewBox="0 0 66 36"><ellipse cx="31" cy="25" rx="31" ry="9" fill="#c9c7bc"/><ellipse cx="31" cy="24" rx="27" ry="7" fill="#efece3"/><path d="M15 18l35-5v10l-35 7z" fill="#f6dca8"/><path d="M15 28l35-6v2l-35 7z" fill="#c4924f"/><path d="M13 13L38 1l12 12-35 5z" fill="#e83e5a"/><circle cx="48" cy="21" r="6" fill="#d5263f"/><path d="M45 15l5 0" stroke="#4a8a3a" stroke-width="2"/></svg>
  </div>
  <div class="w-[48px] flex items-center justify-center"><svg class="w-[16px] h-[17px]" viewBox="0 0 16 17"><path d="M0 .5h11M0 16.500h11M1 5h10v7H1zM13 2h2v2h-2zM13 6h2v5h-2z" fill="none" stroke="#fff"/></svg></div>
  <div class="w-[50px] flex items-center justify-center"><svg class="w-[22px] h-[22px]" viewBox="0 0 22 22"><path d="M3 6c1-4 5-5 7-3l2 12c-1 5-5 6-8 4z" fill="#2b9cf2"/><path d="M10 3c3-2 7 0 9 4l-1 9c-1 4-5 5-7 3z" fill="#e14fd0"/><path d="M7 2c3-1 5 0 6 3l1 5-5 2z" fill="#f5b840"/><path d="M3 19c3 2 6 1 8-2l-2-5z" fill="#4fd06e"/></svg></div>
  <div class="w-[49px] flex items-center justify-center"><svg class="w-[22px] h-[20px]" viewBox="0 0 22 20"><path d="M0 2h9l2 2h11v16H0z" fill="#f6c94d"/><path d="M0 7h22v13H0z" fill="#fbdc7a"/><path d="M6 12h10v8H6z" fill="#3d93d8"/></svg></div>
  <div class="w-[49px] flex items-center justify-center"><svg class="w-[20px] h-[26px]" viewBox="0 0 20 26"><path d="M8 1a10 10 0 0 1 8 16" fill="none" stroke="#d8501f" stroke-width="3"/><path d="M7 2a10 10 0 0 0-4 12" fill="none" stroke="#d8501f" stroke-width="3"/><path d="M10 0l-1 15M12 0l-2 15" stroke="#ddd" stroke-width="1.500"/><circle cx="6" cy="20" r="3" fill="none" stroke="#3d93d8" stroke-width="2"/><circle cx="13" cy="22" r="3" fill="none" stroke="#3d93d8" stroke-width="2"/></svg></div>
  <div class="w-[49px] flex items-center justify-center relative"><svg class="w-[24px] h-[24px]"><use href="#chrome"/></svg><div class="absolute left-[26px] top-[21px] w-[13px] h-[14px] rounded-full bg-[#333] border-2 border-[#ccc]"></div></div>
  <div class="w-[49px] flex items-center justify-center relative"><svg class="w-[24px] h-[24px]"><use href="#chrome"/></svg><div class="absolute left-[25px] top-[20px] w-[12px] h-[15px] rounded-full bg-[#ddd] border-2 border-[#444]"></div></div>
  <div class="w-[49px] flex items-center justify-center"><svg class="w-[24px] h-[24px]" viewBox="0 0 24 24"><path d="M3 21l1.500-5A9.500 9.500 0 1 1 8 19.500z" fill="none" stroke="#25d366" stroke-width="2.400"/><path d="M8.500 7.500c-1 2 1 8 7 9l1.500-2-3-1.500-1 1c-1 0-3-2-3-3l1-1-1-3z" fill="#25d366"/></svg></div>
  <div class="w-[49px] flex items-center justify-center"><div class="w-[23px] h-[26px] rounded-[4px] bg-[#8a8d92] flex items-center justify-center"><div class="w-[18px] h-[18px] rounded-full bg-white flex items-center justify-center"><svg class="w-[12px] h-[12px]" viewBox="0 0 12 12"><path d="M2 1l4 5 4-5M6 6v5" fill="none" stroke="#222" stroke-width="1.600"/></svg></div></div></div>
  <div class="w-[49px] flex items-center justify-center relative"><svg class="w-[24px] h-[24px]"><use href="#chrome"/></svg><div class="absolute left-[26px] top-[22px] w-[12px] h-[14px] rounded-full bg-[#222] border border-[#888]"></div></div>
  <div class="w-[51px] flex items-center justify-center relative"><svg class="w-[24px] h-[24px]"><use href="#chrome"/></svg><div class="absolute left-[28px] top-[22px] w-[11px] h-[12px] rounded-full bg-[#1d8a7a] text-[9px] leading-[12px] text-center">1</div></div>
  <div class="w-[46px] bg-[#3a3d44] flex items-center justify-center"><svg class="w-[24px] h-[24px]" viewBox="0 0 16 16"><use href="#word"/></svg></div>
  <div class="w-[52px] flex items-center justify-center"><svg class="w-[22px] h-[24px]" viewBox="0 0 22 24"><rect width="22" height="24" rx="2" fill="#b30b00"/><path d="M4 19c5-4 7-9 7-14 0 5 2 8 7 10-6-1-10 0-14 4z" fill="none" stroke="#fff" stroke-width="1.400"/></svg></div>
  <div class="w-[46px] flex items-center justify-center"><svg class="w-[20px] h-[24px]" viewBox="0 0 20 24"><path d="M4 1l15 2-3 20L1 21z" fill="#a9cfe4"/><path d="M4 1l15 2-.6 4L3.400 5z" fill="#dff0f8"/></svg></div>

  <!-- running app underlines -->
  <div class="absolute left-[538px] bottom-0 w-[39px] h-[2px] bg-[#76b9ed]"></div>
  <div class="absolute left-[587px] bottom-0 w-[40px] h-[2px] bg-[#76b9ed]"></div>
  <div class="absolute left-[733px] bottom-0 w-[40px] h-[2px] bg-[#76b9ed]"></div>
  <div class="absolute left-[782px] bottom-0 w-[40px] h-[2px] bg-[#76b9ed]"></div>
  <div class="absolute left-[829px] bottom-0 w-[43px] h-[2px] bg-[#76b9ed]"></div>
  <div class="absolute left-[881px] bottom-0 w-[39px] h-[2px] bg-[#76b9ed]"></div>
  <div class="absolute left-[930px] bottom-0 w-[39px] h-[2px] bg-[#76b9ed]"></div>

  <!-- tray -->
  <div class="ml-auto flex items-center pr-[4px]">
    <svg class="w-[12px] h-[7px] mr-[9px]" viewBox="0 0 12 7"><path d="M.5 6.500L6 1l5.500 5.500" fill="none" stroke="#fff"/></svg>
    <svg class="w-[15px] h-[13px] mr-[12px]" viewBox="0 0 15 13"><path d="M.5 4.500h3L7 1v11L3.500 8.500h-3zM10 4.500l4 4M14 4.500l-4 4" fill="none" stroke="#fff"/></svg>
    <svg class="w-[13px] h-[16px] mr-[9px]" viewBox="0 0 13 16"><path d="M2 1.500h9M2 14.500h9" stroke="#fff" fill="none"/><path d="M1 5h7v6H1zM8 7l4-2v6l-4-2" fill="none" stroke="#fff"/></svg>
    <svg class="w-[17px] h-[15px] mr-[7px]" viewBox="0 0 17 15"><ellipse cx="7" cy="8" rx="7" ry="4.500" fill="#aeb4bd"/><circle cx="12" cy="10" r="4.500" fill="#2a86d0"/><path d="M12 9v3.500M12 7.500v.8" stroke="#fff"/></svg>
    <svg class="w-[17px] h-[14px] mr-[4px]" viewBox="0 0 17 14"><path d="M.5 3h3V.5h13v10H4M.5 3v5h3M6 13.500h6M9 10.500v3" fill="none" stroke="#fff"/></svg>
    <div class="w-[62px] text-center text-[12px] leading-[18px] whitespace-nowrap">2:01 PM<br>7/30/2025</div>
    <div class="ml-[12px] mr-[19px] relative"><svg class="w-[18px] h-[17px]" viewBox="0 0 18 17"><path d="M0 0h18v12h-6l-3 4v-4H0z" fill="#fff"/><path d="M3 3.500h12M3 6.500h12M3 9h8" stroke="#20232b"/></svg><div class="absolute left-[8px] top-[7px] w-[14px] h-[14px] rounded-full bg-[#33363d] border border-[#bbb] text-[9px] leading-[12px] text-center font-bold">1</div></div>
    <div class="w-px h-[40px] bg-[#555]"></div>
  </div>
</div>

</body>
</html>
